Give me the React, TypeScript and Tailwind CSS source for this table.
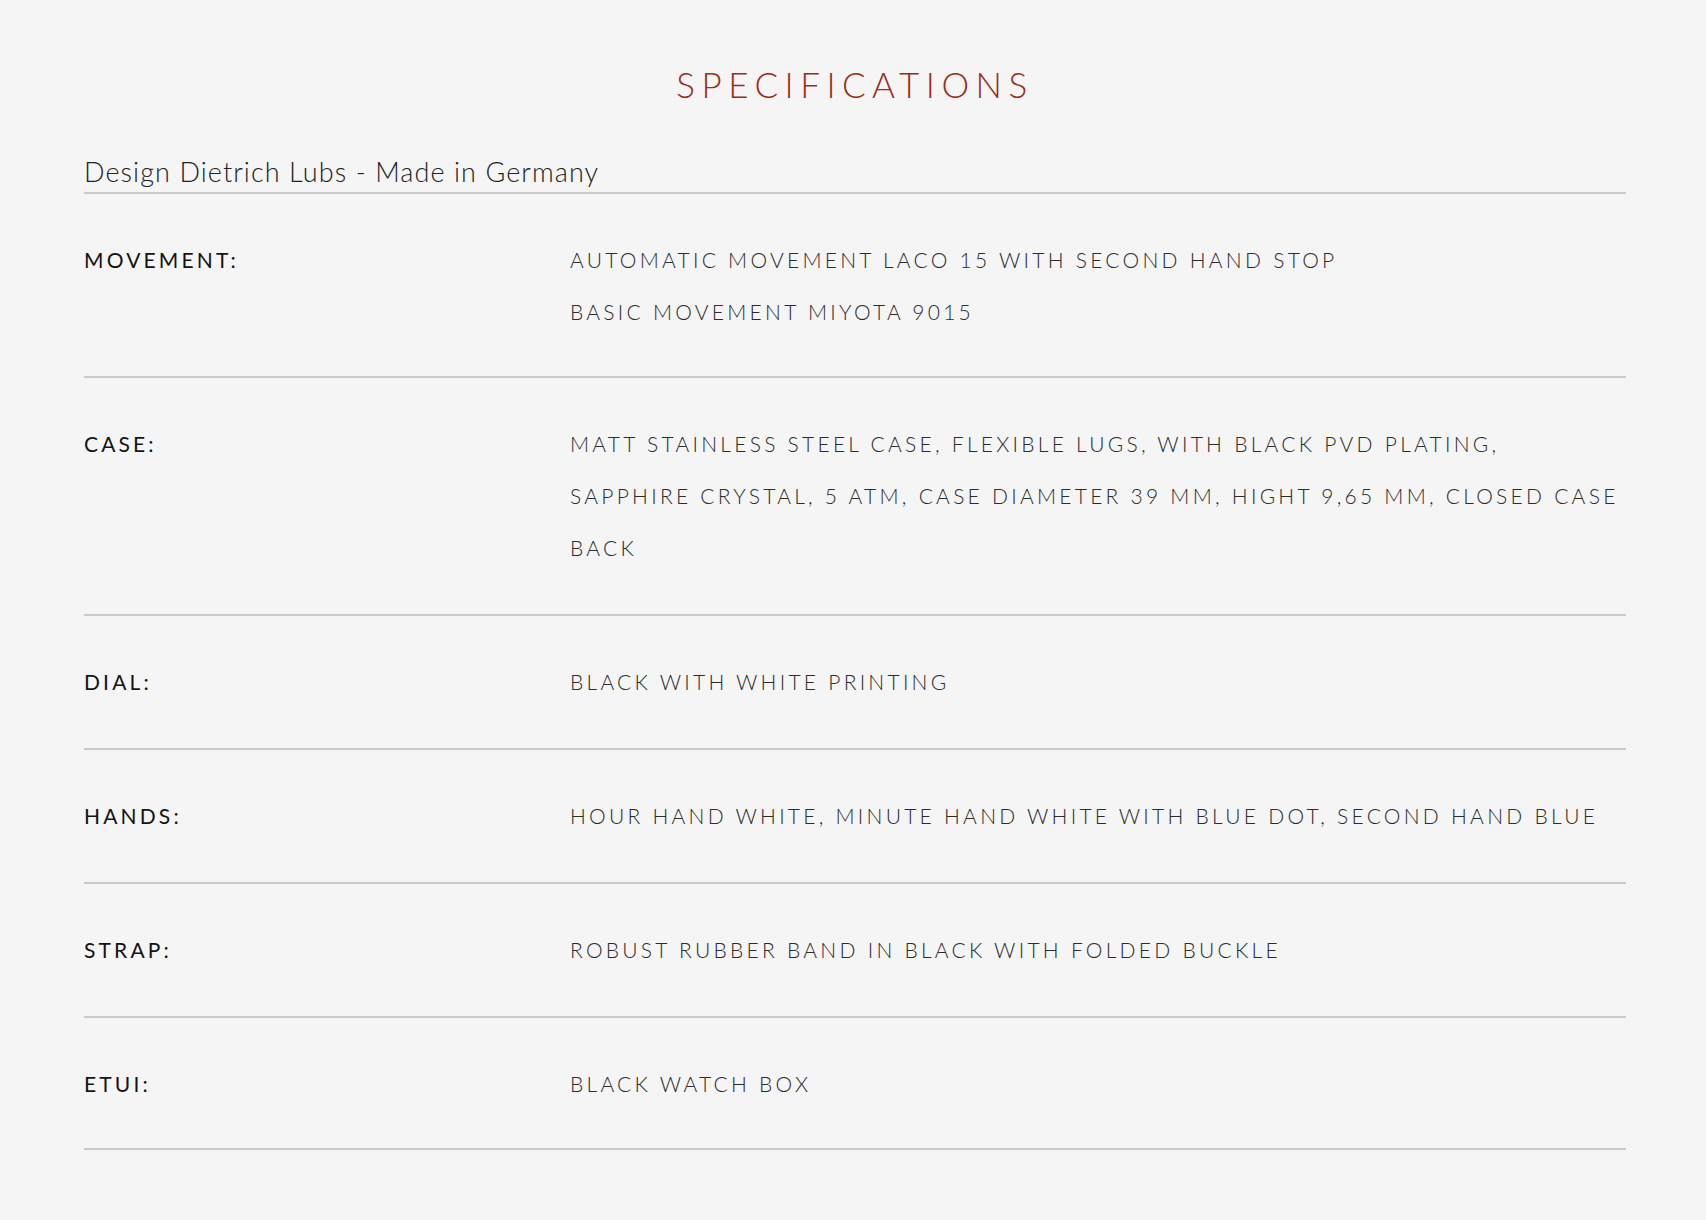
const SPECS = [
  {
    label: "Movement:",
    lines: ["Automatic movement LACO 15 with second hand stop", "Basic movement Miyota 9015"],
  },
  {
    label: "Case:",
    lines: [
      "Matt stainless steel case, flexible lugs, with black PVD plating,",
      "sapphire crystal, 5 ATM, case diameter 39 mm, hight 9,65 mm, closed case",
      "back",
    ],
  },
  { label: "Dial:", lines: ["Black with white printing"] },
  { label: "Hands:", lines: ["Hour hand white, minute hand white with blue dot, second hand blue"] },
  { label: "Strap:", lines: ["Robust rubber band in black with folded buckle"] },
  { label: "Etui:", lines: ["Black watch box"] },
] as const;

function SpecRow({ label, lines, last }: { label: string; lines: readonly string[]; last: boolean }) {
  return (
    <div
      className={`grid grid-cols-[486px_1fr] border-b-2 border-[#cacaca] pt-10 ${lines.length === 2 || last ? "pb-[38px]" : "pb-10"}`}
    >
      <dt className="text-[21px] leading-[52px] font-normal uppercase tracking-[0.15em] text-[#141414]">{label}</dt>
      <dd className="text-[21px] leading-[52px] font-light uppercase tracking-[0.155em] text-[#2c2c2c]">
        {lines.map((line) => (
          <span key={line} className="block whitespace-nowrap">
            {line}
          </span>
        ))}
      </dd>
    </div>
  );
}

export default function App() {
  return (
    <main className="min-h-screen bg-[#f5f5f5] pb-[70px] pl-[84px] pr-[80px] pt-[67px] font-['Lato','Liberation_Sans',sans-serif]">
      <h1 className="text-center text-[35px] leading-none font-light uppercase tracking-[0.185em] text-[#9b2c1a]">
        Specifications
      </h1>
      <p className="mt-[56px] border-b-2 border-[#cacaca] pb-[7px] text-[27px] leading-none font-light tracking-[0.04em] text-[#222]">
        Design Dietrich Lubs - Made in Germany
      </p>
      <dl>
        {SPECS.map((spec, i) => (
          <SpecRow key={spec.label} label={spec.label} lines={spec.lines} last={i === SPECS.length - 1} />
        ))}
      </dl>
    </main>
  );
}
